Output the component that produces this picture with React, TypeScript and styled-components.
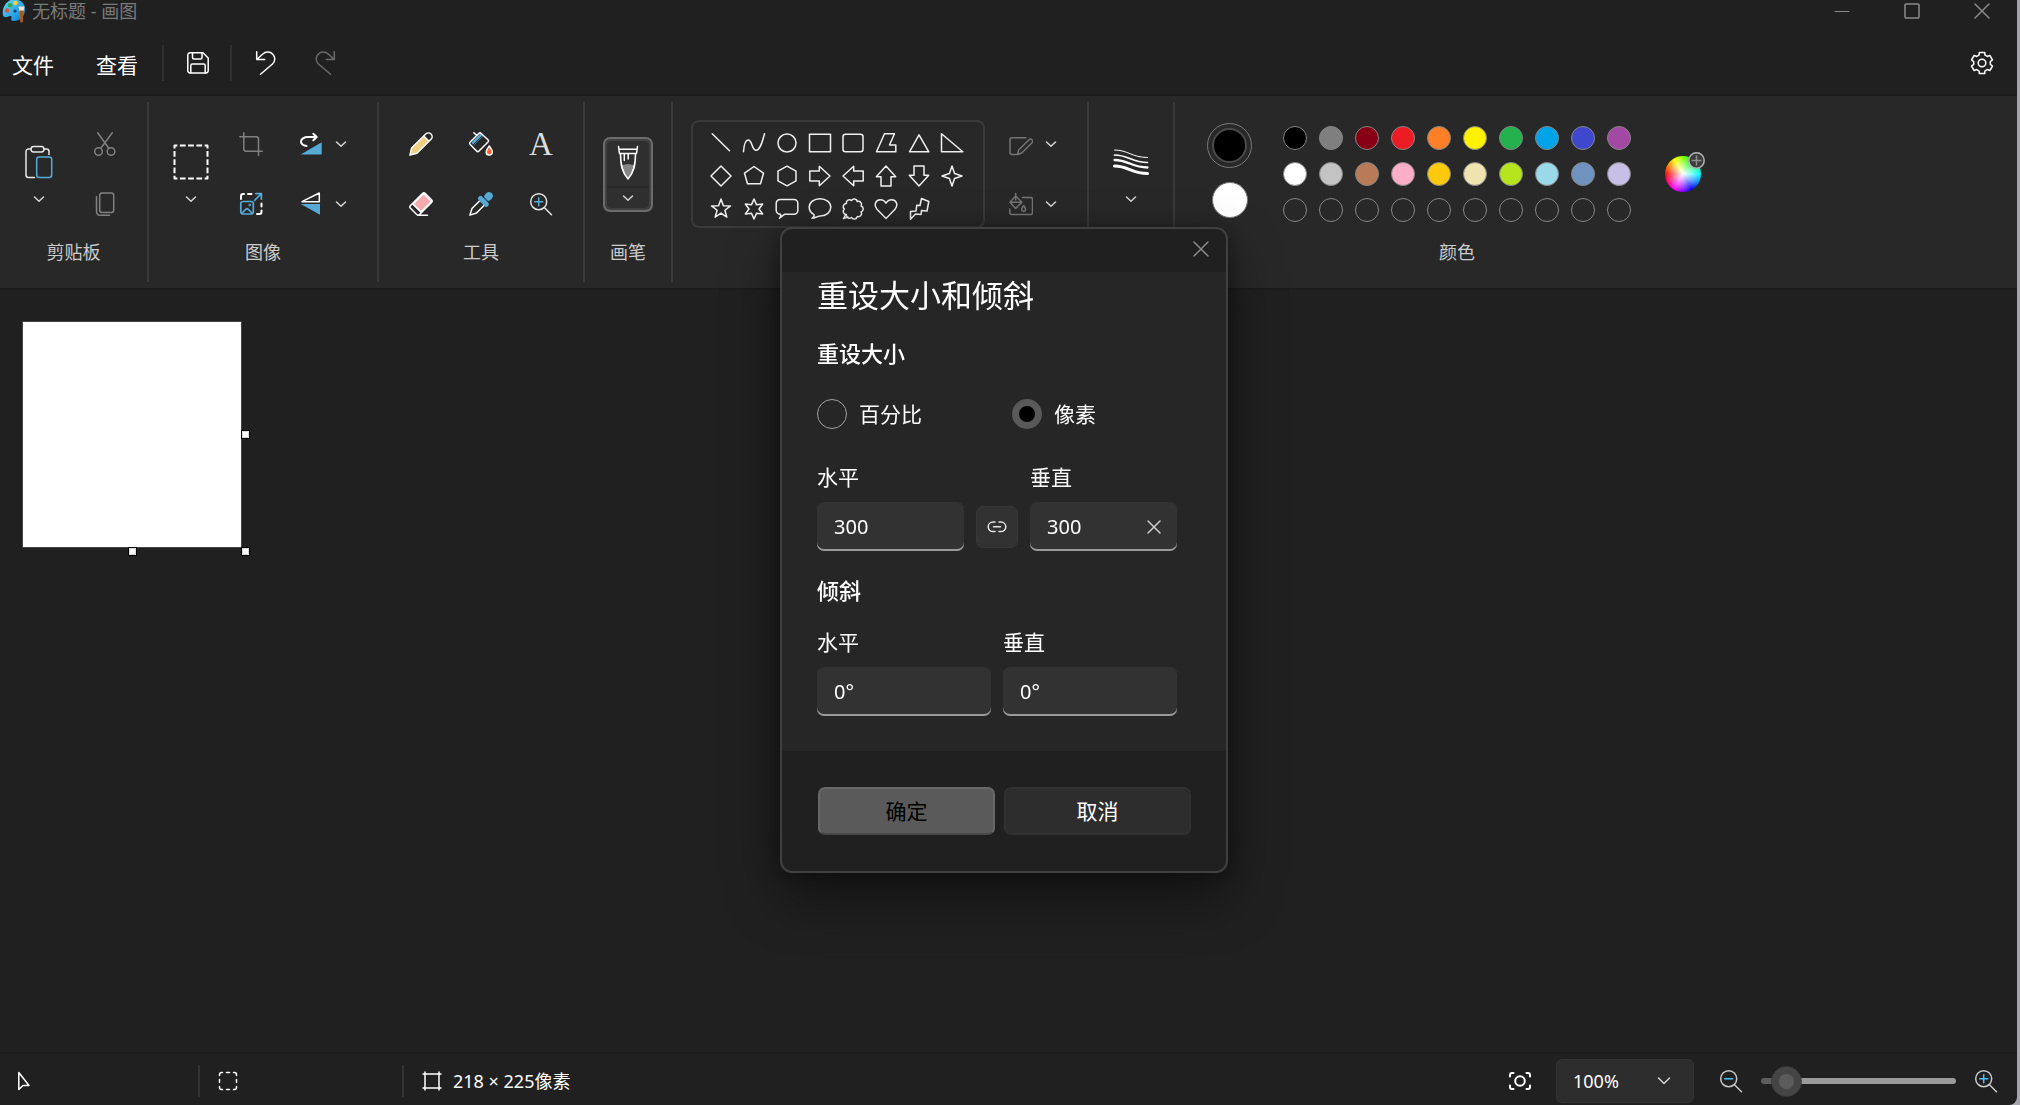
import React, { useState } from "react";
import styled, { createGlobalStyle, css } from "styled-components";

const color = {
  window: "#202020",
  ribbon: "#282828",
  seam: "#1c1c1c",
  divider: "#3a3a3a",
  panel: "#262626",
  control: "#2d2d2d",
  field: "#323232",
  text: "#ffffff",
  label: "#cccccc",
  muted: "#6a6a6a",
  title: "#7a7a7a",
  accent: "#55aad6",
  grey: "#9a9a9a",
};

const GlobalStyle = createGlobalStyle`
  *, *::before, *::after { box-sizing: border-box; }
  body { margin: 0; background: #a5a4ad; }
  body, button, input, select {
    font-family: "Noto Sans", "Noto Sans CJK SC", sans-serif;
    color: ${color.text};
  }
  button { border: 0; padding: 0; background: none; cursor: pointer; }
  h1, h2, p { margin: 0; font-weight: 400; }
  svg { display: block; flex: none; }
`;

/* ---------- window frame ---------- */

const Window = styled.div`
  display: flex;
  flex-direction: column;
  min-height: 100vh;
  margin-right: 3px;
  border-radius: 0 0 8px 0;
  background: ${color.window};
  overflow: hidden;
`;

const TitleBar = styled.header`
  display: flex;
  align-items: center;
  height: 24px;
  padding: 0 27px 2px 2px;
`;

const WindowTitle = styled.h1`
  flex: 1;
  margin-left: 6px;
  font-size: 18px;
  line-height: 24px;
  color: ${color.title};
`;

const Captions = styled.div`
  display: flex;
  gap: 54px;
`;

const IconButton = styled.button<{ $size?: number }>`
  display: grid;
  place-items: center;
  width: ${(p) => p.$size ?? 24}px;
  height: ${(p) => p.$size ?? 24}px;
`;

const MenuBar = styled.nav`
  display: flex;
  align-items: center;
  height: 72px;
  padding: 7px 23px 0 12px;
  border-bottom: 2px solid ${color.seam};
`;

const Menus = styled.div`
  display: flex;
  gap: 42px;
  margin-right: 24px;
`;

const MenuButton = styled.button`
  padding-top: 4px;
  font-size: 21px;
  line-height: 30px;
`;

const Section = styled.div<{ $gap?: number; $right?: boolean }>`
  display: flex;
  align-items: center;
  gap: ${(p) => p.$gap ?? 0}px;
  height: 36px;
  padding: 0 20px 0 22px;
  border-left: 2px solid #303030;
  flex: ${(p) => (p.$right ? 1 : "none")};
`;

/* ---------- ribbon ---------- */

const Ribbon = styled.div`
  display: flex;
  padding: 6px 0;
  background: ${color.ribbon};
  border-bottom: 2px solid ${color.seam};
`;

const Group = styled.section`
  display: grid;
  grid-template-rows: 138px auto;
  padding-bottom: 18px;
  border-right: 2px solid ${color.divider};
  &:last-child { border-right: 0; }
`;

const GroupBody = styled.div<{ $pad: string; $gap?: number }>`
  display: flex;
  align-items: center;
  gap: ${(p) => p.$gap ?? 20}px;
  padding: 6px ${(p) => p.$pad.split(" ")[1]} 0 ${(p) => p.$pad.split(" ")[0]};
`;

const GroupLabel = styled.p`
  min-height: 24px;
  font-size: 18px;
  line-height: 24px;
  text-align: center;
  color: ${color.label};
`;

const Column = styled.div`
  display: grid;
  gap: 20px;
`;

const Row = styled.div`
  display: flex;
`;

const Tool = styled.button<{ $narrow?: boolean }>`
  display: grid;
  place-items: center;
  width: ${(p) => (p.$narrow ? 20 : 40)}px;
  height: 40px;
`;

const LetterTool = styled(Tool)`
  font-family: "Liberation Serif", serif;
  font-size: 33px;
  line-height: 40px;
  color: #dddddd;
`;

const BigTool = styled.div`
  display: flex;
  flex-direction: column;
  align-items: center;
  gap: 9px;
  width: 40px;
  padding-top: 4px;
`;

const ChevronButton = styled.button`
  display: grid;
  place-items: center;
  width: 40px;
  height: 20px;
`;

const BrushSplit = styled.div`
  display: flex;
  flex-direction: column;
  width: 50px;
  height: 75px;
  padding: 2px;
  border: 2px solid #6c6c6c;
  border-radius: 7px;
  background: #404040;
`;

const BrushHalf = styled.button<{ $top?: boolean }>`
  display: grid;
  place-items: center;
  flex: ${(p) => (p.$top ? "1" : "0 0 20px")};
  background: #2f2f2f;
  ${(p) =>
    p.$top
      ? css`
          border-radius: 4px 4px 0 0;
          border-bottom: 2px solid ${color.ribbon};
        `
      : css`
          border-radius: 0 0 4px 4px;
        `}
`;

const ShapePanel = styled.div`
  display: grid;
  grid-template-columns: repeat(8, 33px);
  grid-auto-rows: 33px;
  padding: 4px 15px 1px 11px;
  border: 2px solid ${color.divider};
  border-radius: 8px;
`;

const ShapeButton = styled.button`
  display: grid;
  place-items: center;
`;

/* ---------- colours ---------- */

const ActiveColors = styled.div`
  display: flex;
  flex-direction: column;
  align-items: center;
  gap: 14px;
  padding-bottom: 7px;
`;

const PrimaryRing = styled.button`
  width: 45px;
  height: 45px;
  padding: 4px;
  border: 1px solid #7a7a7a;
  border-radius: 50%;
  &::before {
    content: "";
    display: block;
    height: 35px;
    border: 2px solid #4a4a4a;
    border-radius: 50%;
    background: #000;
  }
`;

const SecondaryDot = styled.button`
  width: 36px;
  height: 36px;
  border: 1px solid #777;
  border-radius: 50%;
  background: #fff;
`;

const Swatches = styled.div`
  display: grid;
  grid-template-columns: repeat(10, 24px);
  gap: 12px;
  margin: 0 3px 0 0;
`;

const Swatch = styled.button<{ $fill: string }>`
  height: 24px;
  border: 1px solid #858585;
  border-radius: 50%;
  background: ${(p) => p.$fill};
`;

const Wheel = styled.button`
  position: relative;
  width: 36px;
  height: 36px;
  border-radius: 50%;
  background: radial-gradient(circle, #fff 0, rgba(255, 255, 255, 0) 70%),
    conic-gradient(from 270deg, #f00, #ff0, #0f0, #0ff, #00f, #f0f, #f00);
`;

const WheelBadge = styled.span`
  position: absolute;
  top: -4px;
  left: 23px;
`;

/* ---------- canvas ---------- */

const Stage = styled.main`
  flex: 1;
  padding: 32px 23px;
`;

const Sheet = styled.div`
  position: relative;
  width: 218px;
  height: 225px;
  background: #fff;
  box-shadow: 0 0 0 1px #444;
`;

const Handle = styled.span<{ $place: "right" | "bottom" | "corner" }>`
  position: absolute;
  width: 9px;
  height: 9px;
  border: 1px solid #000;
  background: #fff;
  box-shadow: inset 0 0 0 1px #d8d8d8;
  ${(p) => p.$place === "right" && "left: 100%; top: calc(50% - 5px);"}
  ${(p) => p.$place === "bottom" && "top: 100%; left: calc(50% - 4px);"}
  ${(p) => p.$place === "corner" && "top: 100%; left: 100%;"}
`;

/* ---------- status bar ---------- */

const StatusBar = styled.footer`
  display: flex;
  align-items: center;
  padding: 5px 19px 2px 0;
  border-top: 2px solid ${color.seam};
`;

const StatusCell = styled.div<{ $width?: number; $inset: number }>`
  display: flex;
  align-items: center;
  gap: 9px;
  height: 32px;
  width: ${(p) => (p.$width ? `${p.$width}px` : "auto")};
  padding-left: ${(p) => p.$inset}px;
  border-right: ${(p) => (p.$width ? `2px solid #333` : "0")};
  font-size: 18px;
  line-height: 24px;
`;

const ZoomTools = styled.div`
  display: flex;
  align-items: center;
  gap: 18px;
  margin-left: auto;
`;

const ZoomPicker = styled.label`
  display: grid;
  grid-template-columns: 1fr 24px;
  align-items: center;
  width: 138px;
  height: 44px;
  margin: 0 7px 0 6px;
  padding-right: 17px;
  border: 1px solid #333;
  border-radius: 6px;
  background: ${color.control};
`;

const ZoomSelect = styled.select`
  grid-area: 1 / 1 / 2 / 3;
  height: 42px;
  padding: 0 0 0 16px;
  border: 0;
  background: transparent;
  appearance: none;
  font-size: 18px;
  outline: none;
`;

const ZoomArrow = styled.span`
  grid-area: 1 / 2;
  display: grid;
  place-items: center;
  pointer-events: none;
`;

const Slider = styled.input`
  width: 195px;
  height: 32px;
  margin: 0;
  appearance: none;
  background: transparent;
  &::-webkit-slider-runnable-track {
    height: 6px;
    border-radius: 3px;
    background: linear-gradient(to right, #5e5e5e 24px, #9a9a9a 24px);
  }
  &::-webkit-slider-thumb {
    appearance: none;
    width: 31px;
    height: 31px;
    margin-top: -12px;
    border: 1px solid #3c3c3c;
    border-radius: 50%;
    background: radial-gradient(circle, #5b5b5b 7px, #454545 8px);
  }
`;

/* ---------- dialog ---------- */

const Overlay = styled.div`
  position: fixed;
  inset: 0;
  display: grid;
  place-items: center;
  padding: 0 12px 5px 0;
`;

const Dialog = styled.form`
  width: 448px;
  border: 2px solid #404040;
  border-radius: 12px;
  background: ${color.window};
  box-shadow: 0 24px 56px rgba(0, 0, 0, 0.45), 0 2px 20px rgba(0, 0, 0, 0.35);
  overflow: hidden;
`;

const DialogBar = styled.div`
  display: flex;
  justify-content: flex-end;
  align-items: center;
  height: 43px;
  padding: 0 13px 3px 0;
`;

const DialogBody = styled.div`
  padding: 2px 49px 35px 35px;
  background: ${color.panel};
`;

const DialogTitle = styled.h2`
  font-size: 31px;
  line-height: 42px;
`;

const SubTitle = styled.legend`
  padding: 0;
  font-size: 22px;
  line-height: 30px;
  font-weight: 500;
`;

const Fieldset = styled.fieldset<{ $top: number }>`
  margin: ${(p) => p.$top}px 0 0;
  padding: 0;
  border: 0;
  min-width: 0;
`;

const Choices = styled.div`
  display: grid;
  grid-template-columns: 195px 1fr;
  margin: 31px 0 33px;
`;

const Choice = styled.label`
  display: flex;
  align-items: center;
  gap: 12px;
  font-size: 21px;
  line-height: 30px;
`;

const Radio = styled.input`
  width: 30px;
  height: 30px;
  margin: 0;
  appearance: none;
  border: 1px solid #a0a0a0;
  border-radius: 50%;
  &:checked {
    border: 7px solid #595959;
    background: #000;
  }
`;

const FieldRow = styled.div<{ $top?: number }>`
  display: flex;
  align-items: flex-end;
  gap: 12px;
  margin-top: ${(p) => p.$top ?? 0}px;
`;

const FieldColumn = styled.div`
  flex: 1;
  min-width: 0;
`;

const FieldLabel = styled.label`
  display: block;
  margin-bottom: 10px;
  font-size: 21px;
  line-height: 30px;
`;

const FieldBox = styled.div`
  display: flex;
  align-items: center;
  height: 49px;
  padding: 0 11px 0 17px;
  border-radius: 7px;
  background: ${color.field};
  box-shadow: inset 0 -2px 0 ${color.grey};
`;

const FieldInput = styled.input`
  flex: 1;
  min-width: 0;
  padding: 0;
  border: 0;
  outline: none;
  background: transparent;
  font-size: 20px;
  line-height: 30px;
`;

const LinkButton = styled.button`
  display: grid;
  place-items: center;
  width: 42px;
  height: 42px;
  margin-bottom: 3px;
  border: 1px solid #363636;
  border-radius: 7px;
  background: ${color.field};
`;

const DialogFooter = styled.div`
  display: grid;
  grid-template-columns: 177fr 187fr;
  gap: 9px;
  padding: 36px 35px 36px 36px;
`;

const ActionButton = styled.button<{ $primary?: boolean }>`
  height: 48px;
  border: ${(p) => (p.$primary ? "2px solid #686868" : "2px solid #313131")};
  border-bottom-color: ${(p) => (p.$primary ? "#484848" : "#303030")};
  border-radius: 7px;
  background: ${(p) => (p.$primary ? "#5a5a5a" : color.control)};
  color: ${(p) => (p.$primary ? "#000" : color.text)};
  font-size: 21px;
  line-height: 30px;
`;

/* ---------- drawings ---------- */

type IconProps = {
  children: React.ReactNode;
  size?: number;
  tone?: string;
  width?: number;
};

const Icon = ({ children, size = 24, tone = "#fff", width = 1.5 }: IconProps) => (
  <svg
    width={size}
    height={size}
    viewBox={`0 0 ${size} ${size}`}
    fill="none"
    stroke={tone}
    strokeWidth={width}
    strokeLinecap="round"
    strokeLinejoin="round"
    aria-hidden="true"
  >
    {children}
  </svg>
);

const Chevron = ({ tone = "#d4d4d4", wide = false }) => (
  <Icon size={16} tone={tone}>
    <path d={wide ? "M2.5 5L8 10.5 13.5 5" : "M3.5 6L8 10.3 12.5 6"} />
  </Icon>
);

const Cross = ({ size = 16, tone = "#8a8a8a" }) => (
  <Icon size={size} tone={tone}>
    <path d={`M1 1L${size - 1} ${size - 1}M${size - 1} 1L1 ${size - 1}`} />
  </Icon>
);

const ring = (n: number, radii: number[], start = -90) =>
  Array.from({ length: n * radii.length }, (_, i) => {
    const a = ((start + (i * 360) / (n * radii.length)) * Math.PI) / 180;
    const r = radii[i % radii.length];
    return `${(12 + r * Math.cos(a)).toFixed(2)},${(12 + r * Math.sin(a)).toFixed(2)}`;
  }).join(" ");

const gear = Array.from({ length: 6 }, (_, k) =>
  [
    [-21, 8.4],
    [-14, 10.9],
    [14, 10.9],
    [21, 8.4],
  ]
    .map(([da, r]) => {
      const a = ((k * 60 - 90 + da) * Math.PI) / 180;
      return `${(12 + r * Math.cos(a)).toFixed(2)},${(12 + r * Math.sin(a)).toFixed(2)}`;
    })
    .join(" ")
).join(" ");

const scallops = (() => {
  const pts = ring(9, [8.6], -100).split(" ");
  return `M${pts[0]}` + [...pts.slice(1), pts[0]].map((p) => `A3.1 3.1 0 0 1 ${p}`).join("");
})();

const shapes: [string, React.ReactNode][] = [
  ["直线", <path d="M3.2 2.8L20.5 19.8" />],
  ["曲线", <path d="M1.5 20.8C2 13 3.3 9 6.3 9c4 0 3.4 10.3 7.7 10.3S20.5 10 22.5 2.8" />],
  ["椭圆", <circle cx="12" cy="12" r="9" />],
  ["矩形", <rect x="1.5" y="3.2" width="21" height="17.6" />],
  ["圆角矩形", <rect x="2" y="3.2" width="20" height="17.6" rx="2.5" />],
  ["多边形", <path d="M2.5 20.8L10.5 2.8H20.5L15.5 14H21.8V20.8z" />],
  ["三角形", <path d="M2.5 20.8L12 3.8 21.8 20.8z" />],
  ["直角三角形", <path d="M1.5 2.8V20.8H22.8z" />],
  ["菱形", <path d="M12 2l10 10-10 10L2 12z" />],
  ["五边形", <path d="M12 2.5l9.5 6.7-3 10.6h-13l-3-10.6z" />],
  ["六边形", <path d="M12 2.2l9 5v9.6l-9 5-9-5V7.2z" />],
  ["右箭头", <path d="M1.8 7H11.3V2.3L22 12 11.3 21.7V17H1.8z" />],
  ["左箭头", <path d="M22.2 7H12.7V2.3L2 12 12.7 21.7V17H22.2z" />],
  ["上箭头", <path d="M7 22V12.7H2.3L12 2l9.7 10.7H17V22z" />],
  ["下箭头", <path d="M7 2V11.3H2.3L12 22l9.7-10.7H17V2z" />],
  ["四角星", <polygon points={ring(4, [10, 3.6])} />],
  ["五角星", <polygon points={ring(5, [10, 4.1])} />],
  ["六角星", <polygon points={ring(6, [10, 5])} />],
  [
    "圆角标注",
    <path d="M5 2.5H19a3.8 3.8 0 0 1 3.8 3.8V13.5a3.8 3.8 0 0 1-3.8 3.8H9.5L4.5 21.2C6 20 6 18.5 5.5 17.3a4 4 0 0 1-4.3-3.8V6.3A3.8 3.8 0 0 1 5 2.5z" />,
  ],
  [
    "椭圆标注",
    <path d="M6 17.600C3 16 1.200 13 1.200 10.300 1.200 5.300 6 1.800 12 1.800s10.800 3.500 10.800 8.300S18.500 19 12.500 19c-3 0-4.500 1.800-8.500 2.300C6 20 6.500 19 6 17.600z" />,
  ],
  [
    "云形标注",
    <>
      <path d={scallops} />
      <path d="M4.500 18l-2 3.500 4.500-1.500" />
    </>,
  ],
  ["心形", <path d="M12 21.500L3 12.200C-.500 8 1.500 2.800 6.300 2.800c2.700 0 4.600 1.400 5.700 3.400 1.100-2 3-3.400 5.700-3.400 4.800 0 6.800 5.200 3.300 9.400z" />],
  ["闪电形", <path d="M14.5 1.5L21.8 4.5 20 14 14.5 13.5 14 17.5 8.5 17 3.5 22.2 3.5 14.5 9 14 9.8 8.2 13 8.5z" />],
];

const palette = [
  ["#000000", "#7f7f7f", "#880015", "#ed1c24", "#ff7f27", "#fff200", "#22b14c", "#00a2e8", "#3f48cc", "#a349a4"],
  ["#ffffff", "#c3c3c3", "#b97a57", "#ffaec9", "#ffc90e", "#efe4b0", "#b5e61d", "#99d9ea", "#7092be", "#c8bfe7"],
  Array(10).fill("transparent"),
].flat();

const AppLogo = () => (
  <svg width="24" height="24" viewBox="0 0 24 24" aria-hidden="true">
    <defs>
      <linearGradient id="logo" x1="0" y1="0" x2="1" y2="1">
        <stop offset="0" stopColor="#5fe0fa" />
        <stop offset="1" stopColor="#0a78d6" />
      </linearGradient>
    </defs>
    <path
      d="M12 .5C19 .5 23.5 4.5 23 11c-.5 7-5 11-11 11-3.5 0-3-2-2.5-3.5.4-1.5-1-2-2.5-1.2-2 1-5 1.7-6-1C-.5 9 4.5.5 12 .5z"
      fill="url(#logo)"
    />
    <circle cx="13.5" cy="4" r="2.2" fill="#ffcf3a" />
    <circle cx="8" cy="6.2" r="2.2" fill="#35a84a" />
    <circle cx="5" cy="11.5" r="2.2" fill="#e2572b" />
    <circle cx="13" cy="12" r="1.6" fill="#16406e" />
    <path d="M16.5 7.5h6l-1 4.5h-4z" fill="#f6e2c4" />
    <path d="M18 11.5h3V22a1.5 1.5 0 0 1-3 0z" fill="#a55a1c" />
  </svg>
);

const Undo = () => (
  <path d="M2.7 .8V8.6H10.7M3 8.3L8.5 3.2C11.5 .5 16 .3 18.8 3.200S21.300 10.300 18.500 13L6.500 23.300" />
);

const Magnifier = ({ sign, tone = "#e4e4e4", blue = color.accent }: { sign: "plus" | "minus"; tone?: string; blue?: string }) => (
  <Icon tone={tone}>
    <circle cx="9.7" cy="9.7" r="8" />
    <path d="M15.5 15.7L22.5 22.7" />
    <path d={sign === "plus" ? "M9.7 5.7V13.7M5.7 9.7H13.7" : "M5.7 9.7H13.7"} stroke={blue} />
  </Icon>
);

const DownArrow = ({ label }: { label: string }) => (
  <Tool $narrow aria-label={label}>
    <Chevron />
  </Tool>
);

/* ---------- page ---------- */

export default function App() {
  const [unit, setUnit] = useState("pixels");
  const [width, setWidth] = useState("300");
  const [height, setHeight] = useState("300");
  const [skewX, setSkewX] = useState("0°");
  const [skewY, setSkewY] = useState("0°");
  const [zoom, setZoom] = useState(6);

  return (
    <>
      <GlobalStyle />
      <Window>
        <TitleBar>
          <AppLogo />
          <WindowTitle>无标题 - 画图</WindowTitle>
          <Captions>
            <IconButton $size={16} aria-label="最小化">
              <Icon size={16} tone="#8a8a8a" width={1}>
                <path d="M1 8.500H15" />
              </Icon>
            </IconButton>
            <IconButton $size={16} aria-label="最大化">
              <Icon size={16} tone="#8a8a8a">
                <rect x="1" y="1" width="14" height="14" rx="1" />
              </Icon>
            </IconButton>
            <IconButton $size={16} aria-label="关闭">
              <Cross />
            </IconButton>
          </Captions>
        </TitleBar>

        <MenuBar>
          <Menus>
            <MenuButton>文件</MenuButton>
            <MenuButton>查看</MenuButton>
          </Menus>
          <Section>
            <IconButton aria-label="保存">
              <Icon>
                <path d="M4 1.8H17L22.2 7V19.7a2.2 2.2 0 0 1-2.2 2.2H4A2.2 2.2 0 0 1 1.8 19.7V4A2.2 2.2 0 0 1 4 1.8z" />
                <path d="M6.5 2V6.5A1.5 1.5 0 0 0 8 8H14.5A1.5 1.5 0 0 0 16 6.5V2M4.8 21.8V14.5A1.5 1.5 0 0 1 6.3 13H17.7A1.5 1.5 0 0 1 19.2 14.5V21.8" />
              </Icon>
            </IconButton>
          </Section>
          <Section $gap={35} $right>
            <IconButton aria-label="撤消">
              <Icon>
                <Undo />
              </Icon>
            </IconButton>
            <IconButton aria-label="重做">
              <Icon tone={color.muted}>
                <g transform="matrix(-1 0 0 1 24 0)">
                  <Undo />
                </g>
              </Icon>
            </IconButton>
          </Section>
          <IconButton aria-label="设置">
            <Icon>
              <polygon points={gear} />
              <circle cx="12" cy="12" r="3.8" />
            </Icon>
          </IconButton>
        </MenuBar>

        <Ribbon>
          <Group>
            <GroupBody $pad="19px 22px" $gap={26}>
              <BigTool>
                <IconButton $size={36} aria-label="粘贴">
                  <Icon size={36} tone="#e8e8e8">
                    <path d="M13.5 33.5H7.5a2.5 2.5 0 0 1-2.5-2.5V7.5A2.5 2.5 0 0 1 7.5 5H10M23 5h2.5A2.5 2.5 0 0 1 28 7.5V10.5" />
                    <rect x="10" y="2.5" width="13" height="5.5" rx="2.7" />
                    <rect x="15.7" y="13" width="15" height="20.5" rx="2.5" stroke={color.accent} />
                  </Icon>
                </IconButton>
                <ChevronButton aria-label="粘贴选项">
                  <Chevron />
                </ChevronButton>
              </BigTool>
              <Column>
                <Tool aria-label="剪切">
                  <Icon tone="#808080">
                    <circle cx="5.5" cy="19.5" r="3.8" />
                    <circle cx="18" cy="19.5" r="3.8" />
                    <path d="M4.7 .8L15.8 16.3M19.3 .8L7.8 16.3" />
                  </Icon>
                </Tool>
                <Tool aria-label="复制">
                  <Icon tone="#808080">
                    <rect x="6.7" y="1" width="14" height="19.5" rx="2.5" />
                    <path d="M3.5 4.5V19.5A4 4 0 0 0 7.5 23.3H16.5" />
                  </Icon>
                </Tool>
              </Column>
            </GroupBody>
            <GroupLabel>剪贴板</GroupLabel>
          </Group>

          <Group>
            <GroupBody $pad="22px 26px">
              <BigTool>
                <IconButton $size={36} aria-label="选择">
                  <Icon size={36} width={2}>
                    <rect x="1.5" y="1.5" width="33" height="33" strokeDasharray="5.75 2.5" strokeDashoffset="2.875" strokeLinecap="butt" />
                  </Icon>
                </IconButton>
                <ChevronButton aria-label="选择选项">
                  <Chevron />
                </ChevronButton>
              </BigTool>
              <Column>
                <Tool aria-label="裁剪">
                  <Icon tone="#808080">
                    <path d="M.8 4.8H17A2.5 2.5 0 0 1 19.5 7.3V23.3M4.8 .8V16.7A2.5 2.5 0 0 0 7.3 19.2H23.3" />
                  </Icon>
                </Tool>
                <Tool aria-label="重设大小和倾斜">
                  <Icon width={2}>
                    <path d="M2 7V4A2 2 0 0 1 4 2H5M9 2H12.5M22.5 11.5V14.5M22.5 18.5V20A2 2 0 0 1 20.5 22H18" />
                    <g stroke={color.accent} strokeWidth="1.7">
                      <path d="M15.5 8.5L22 2M16.8 1.6H22.4V7.2" />
                      <rect x="1.8" y="9.5" width="12.5" height="12.5" rx="2.2" />
                      <path d="M3 21L7 17.2A1.5 1.5 0 0 1 9 17.2L13 21" />
                      <circle cx="10.8" cy="13" r=".5" />
                    </g>
                  </Icon>
                </Tool>
              </Column>
              <Column>
                <Row>
                  <Tool aria-label="旋转">
                    <Icon width={2}>
                      <path d="M1.7 22.5H22.7V10.3z" fill={color.accent} stroke="none" />
                      <path d="M7.5 14C4.5 13.5 2 12 2 9.6 2 7 5 5 9 5H17.5M14.3 1.8L17.7 5 14.3 8.3" />
                    </Icon>
                  </Tool>
                  <DownArrow label="旋转选项" />
                </Row>
                <Row>
                  <Tool aria-label="翻转">
                    <Icon>
                      <path d="M3 9.7L20.3 1V9.7z" />
                      <path d="M1.7 12H21V22.7z" fill={color.accent} stroke="none" />
                    </Icon>
                  </Tool>
                  <DownArrow label="翻转选项" />
                </Row>
              </Column>
            </GroupBody>
            <GroupLabel>图像</GroupLabel>
          </Group>

          <Group>
            <GroupBody $pad="22px 22px">
              <Column>
                <Tool aria-label="铅笔">
                  <Icon>
                    <path d="M1 23L2.8 16 14.8 4 20 9.2 8 21.2z" fill="#f0cf84" stroke="none" />
                    <path d="M.9 23.1L2.6 16 16.7 2A3.7 3.7 0 0 1 22 7.3L8 21.3zM14.8 4L20 9.2" />
                  </Icon>
                </Tool>
                <Tool aria-label="橡皮擦">
                  <Icon>
                    <path d="M14.5 1.5L22.5 9.5 12 20 4 12z" fill="#f5abab" />
                    <path d="M13.5 1.5A2 2 0 0 1 16.3 1.5L22.5 7.7A2 2 0 0 1 22.5 10.5L10.5 22.5A2 2 0 0 1 7.7 22.5L1.5 16.3A2 2 0 0 1 1.5 13.5zM4 12L12 20M8.5 23.2H18.5" />
                  </Icon>
                </Tool>
              </Column>
              <Column>
                <Tool aria-label="填充">
                  <Icon>
                    <path d="M2.5 10.5L11.5 1.5 14.5 3.7 4.5 13.5z" fill={color.accent} stroke="none" />
                    <path d="M4.5 12.5L14.5 2.7" stroke="#282828" strokeWidth="1" />
                    <path d="M9.8 1.5A1.7 1.7 0 0 1 12.2 1.5L19 7.7A1.7 1.7 0 0 1 19 10L10 19A1.7 1.7 0 0 1 7.6 19L1.2 12.5A1.7 1.7 0 0 1 1.2 10zM4.8 .8L8 3.5" />
                    <path d="M20.3 14C18.5 16.5 17.2 18 17.2 20A3.1 3.1 0 0 0 23.4 20C23.4 18 22 16.5 20.3 14z" fill="#f7642e" />
                  </Icon>
                </Tool>
                <Tool aria-label="颜色选取器">
                  <Icon>
                    <path d="M.9 23.1L3 16.5 10.5 9M15 13.5L7.5 21 .9 23.1" />
                    <path d="M11.5 6.5L17.3 12.3" stroke={color.accent} strokeWidth="5" />
                    <path d="M19 5L20 4" stroke={color.accent} strokeWidth="7.5" />
                    <path d="M14 4.5L19.3 9.8" stroke="#282828" strokeWidth="1" />
                  </Icon>
                </Tool>
              </Column>
              <Column>
                <LetterTool aria-label="文本">A</LetterTool>
                <Tool aria-label="放大镜">
                  <Magnifier sign="plus" />
                </Tool>
              </Column>
            </GroupBody>
            <GroupLabel>工具</GroupLabel>
          </Group>

          <Group>
            <GroupBody $pad="18px 18px">
              <BrushSplit>
                <BrushHalf $top aria-label="画笔">
                  <Icon size={36}>
                    <path d="M11.8 20.5Q18 17.5 24.2 20.5C23.5 26.5 21 30.5 18 33.8 15 30.5 12.5 26.5 11.8 20.5z" fill="#858585" stroke="none" />
                    <path d="M8.5 1.5L9.5 8.5H26.5L27.5 1.5M8.8 4.2H27.2M10.5 8.5C10.5 20 12 27.5 18 34 24 27.5 25.5 20 25.5 8.5M14.3 9V15.5M18.2 9V14" />
                  </Icon>
                </BrushHalf>
                <BrushHalf aria-label="画笔选项">
                  <Chevron />
                </BrushHalf>
              </BrushSplit>
            </GroupBody>
            <GroupLabel>画笔</GroupLabel>
          </Group>

          <Group>
            <GroupBody $pad="18px 26px" $gap={16}>
              <ShapePanel>
                {shapes.map(([name, art]) => (
                  <ShapeButton key={name} aria-label={name}>
                    <Icon tone="#f0f0f0">{art}</Icon>
                  </ShapeButton>
                ))}
              </ShapePanel>
              <Column>
                <Row>
                  <Tool aria-label="形状轮廓">
                    <Icon tone="#747474">
                      <path d="M17 5.8H3A2 2 0 0 0 1 7.8V20.5A2 2 0 0 0 3 22.5H8.5M8.5 22.5L9.7 18 20 7.8A2 2 0 0 1 23 10.7L12.7 21z" />
                    </Icon>
                  </Tool>
                  <DownArrow label="轮廓选项" />
                </Row>
                <Row>
                  <Tool aria-label="形状填充">
                    <Icon tone="#747474">
                      <path d="M13.5 5.5H21.5A2 2 0 0 1 23.5 7.5V20.5A2 2 0 0 1 21.5 22.5H2.8A2 2 0 0 1 .8 20.5V17M6.7 1.5V8M6.7 4L12.9 10.2 6.7 16.4 .9 10.2zM1 10.2H12.7M14.7 13.5C11.5 17.5 12.5 19.3 14.7 19.3S17.5 17.5 14.7 13.5z" />
                    </Icon>
                  </Tool>
                  <DownArrow label="填充选项" />
                </Row>
              </Column>
            </GroupBody>
          </Group>

          <Group>
            <GroupBody $pad="22px 22px">
              <BigTool>
                <IconButton $size={36} aria-label="粗细">
                  <Icon size={36}>
                    <path d="M1.5 6C15 6 19 13.5 34.5 13.5" strokeWidth="1" />
                    <path d="M1.5 11C15 11 19 18.5 34.5 18.5" strokeWidth="1.7" />
                    <path d="M1.5 16C15 16 19 23.5 34.5 23.5" strokeWidth="2.3" />
                    <path d="M1.5 22C15 22 19 29.5 34.5 29.5" strokeWidth="3" />
                  </Icon>
                </IconButton>
                <ChevronButton aria-label="粗细选项">
                  <Chevron />
                </ChevronButton>
              </BigTool>
            </GroupBody>
          </Group>

          <Group>
            <GroupBody $pad="32px 38px" $gap={31}>
              <ActiveColors>
                <PrimaryRing aria-label="颜色 1" />
                <SecondaryDot aria-label="颜色 2" />
              </ActiveColors>
              <Swatches>
                {palette.map((fill, i) => (
                  <Swatch key={i} $fill={fill} aria-label={`颜色 ${i + 1}`} />
                ))}
              </Swatches>
              <Wheel aria-label="编辑颜色">
                <WheelBadge>
                  <svg width="17" height="17" viewBox="0 0 17 17" aria-hidden="true">
                    <circle cx="8.5" cy="8.5" r="7.7" fill="#3c3c3c" stroke="#b4b4b4" strokeWidth="1.5" />
                    <path d="M8.5 3.5V13.5M3.5 8.5H13.5" stroke="#8f8f8f" strokeWidth="1.5" />
                  </svg>
                </WheelBadge>
              </Wheel>
            </GroupBody>
            <GroupLabel>颜色</GroupLabel>
          </Group>
        </Ribbon>

        <Stage>
          <Sheet>
            <Handle $place="right" />
            <Handle $place="bottom" />
            <Handle $place="corner" />
          </Sheet>
        </Stage>

        <StatusBar>
          <StatusCell $width={200} $inset={12}>
            <Icon>
              <path d="M6.8 3.500V20.500L11 16.500H17z" />
            </Icon>
          </StatusCell>
          <StatusCell $width={204} $inset={16}>
            <Icon>
              <path d="M3.5 6.5V5.5A2 2 0 0 1 5.5 3.5H6.5M10.5 3.5H13.5M17.5 3.5H18.5A2 2 0 0 1 20.5 5.5V6.5M20.5 10.5V13.5M20.5 17.5V18.5A2 2 0 0 1 18.5 20.5H17.5M13.5 20.5H10.5M6.5 20.5H5.5A2 2 0 0 1 3.5 18.5V17.5M3.5 13.5V10.5" />
            </Icon>
          </StatusCell>
          <StatusCell $inset={16}>
            <Icon>
              <path d="M5 3V21M19 3V21M3 5H21M3 19H21" />
            </Icon>
            218 × 225像素
          </StatusCell>
          <ZoomTools>
            <IconButton aria-label="适应窗口">
              <Icon width={2}>
                <path d="M2 7.5V6A2 2 0 0 1 4 4H5.5M18.5 4H20A2 2 0 0 1 22 6V7.5M22 16.5V18A2 2 0 0 1 20 20H18.5M5.5 20H4A2 2 0 0 1 2 18V16.5" />
                <circle cx="12" cy="12" r="4.8" />
              </Icon>
            </IconButton>
            <ZoomPicker>
              <ZoomSelect aria-label="缩放" defaultValue="100%">
                <option>100%</option>
              </ZoomSelect>
              <ZoomArrow>
                <Chevron wide />
              </ZoomArrow>
            </ZoomPicker>
            <IconButton aria-label="缩小">
              <Magnifier sign="minus" tone="#c8c8c8" blue="#4cc2ff" />
            </IconButton>
            <Slider type="range" aria-label="缩放级别" min={0} max={100} value={zoom} onChange={(e) => setZoom(Number(e.target.value))} />
            <IconButton aria-label="放大">
              <Magnifier sign="plus" tone="#c8c8c8" blue="#4cc2ff" />
            </IconButton>
          </ZoomTools>
        </StatusBar>
      </Window>

      <Overlay>
        <Dialog role="dialog" aria-labelledby="dialog-title" onSubmit={(e) => e.preventDefault()}>
          <DialogBar>
            <IconButton type="button" aria-label="关闭对话框">
              <Cross />
            </IconButton>
          </DialogBar>
          <DialogBody>
            <DialogTitle id="dialog-title">重设大小和倾斜</DialogTitle>
            <Fieldset $top={22}>
              <SubTitle>重设大小</SubTitle>
              <Choices>
                <Choice>
                  <Radio type="radio" name="unit" checked={unit === "percent"} onChange={() => setUnit("percent")} />
                  百分比
                </Choice>
                <Choice>
                  <Radio type="radio" name="unit" checked={unit === "pixels"} onChange={() => setUnit("pixels")} />
                  像素
                </Choice>
              </Choices>
              <FieldRow>
                <FieldColumn>
                  <FieldLabel htmlFor="width">水平</FieldLabel>
                  <FieldBox>
                    <FieldInput id="width" value={width} onChange={(e) => setWidth(e.target.value)} />
                  </FieldBox>
                </FieldColumn>
                <LinkButton type="button" aria-label="保持纵横比">
                  <Icon size={20} tone="#e4e4e4">
                    <path d="M8 5H6A4.800 4.800 0 0 0 6 14.600H8M12 5H14A4.800 4.800 0 0 1 14 14.600H12M6.500 9.800H13.500" />
                  </Icon>
                </LinkButton>
                <FieldColumn>
                  <FieldLabel htmlFor="height">垂直</FieldLabel>
                  <FieldBox>
                    <FieldInput id="height" value={height} onChange={(e) => setHeight(e.target.value)} />
                    <IconButton type="button" aria-label="清除" onClick={() => setHeight("")}>
                      <Cross size={14} tone="#d0d0d0" />
                    </IconButton>
                  </FieldBox>
                </FieldColumn>
              </FieldRow>
            </Fieldset>
            <Fieldset $top={24}>
              <SubTitle>倾斜</SubTitle>
              <FieldRow $top={22}>
                <FieldColumn>
                  <FieldLabel htmlFor="skew-x">水平</FieldLabel>
                  <FieldBox>
                    <FieldInput id="skew-x" value={skewX} onChange={(e) => setSkewX(e.target.value)} />
                  </FieldBox>
                </FieldColumn>
                <FieldColumn>
                  <FieldLabel htmlFor="skew-y">垂直</FieldLabel>
                  <FieldBox>
                    <FieldInput id="skew-y" value={skewY} onChange={(e) => setSkewY(e.target.value)} />
                  </FieldBox>
                </FieldColumn>
              </FieldRow>
            </Fieldset>
          </DialogBody>
          <DialogFooter>
            <ActionButton type="submit" $primary>
              确定
            </ActionButton>
            <ActionButton type="button">取消</ActionButton>
          </DialogFooter>
        </Dialog>
      </Overlay>
    </>
  );
}
